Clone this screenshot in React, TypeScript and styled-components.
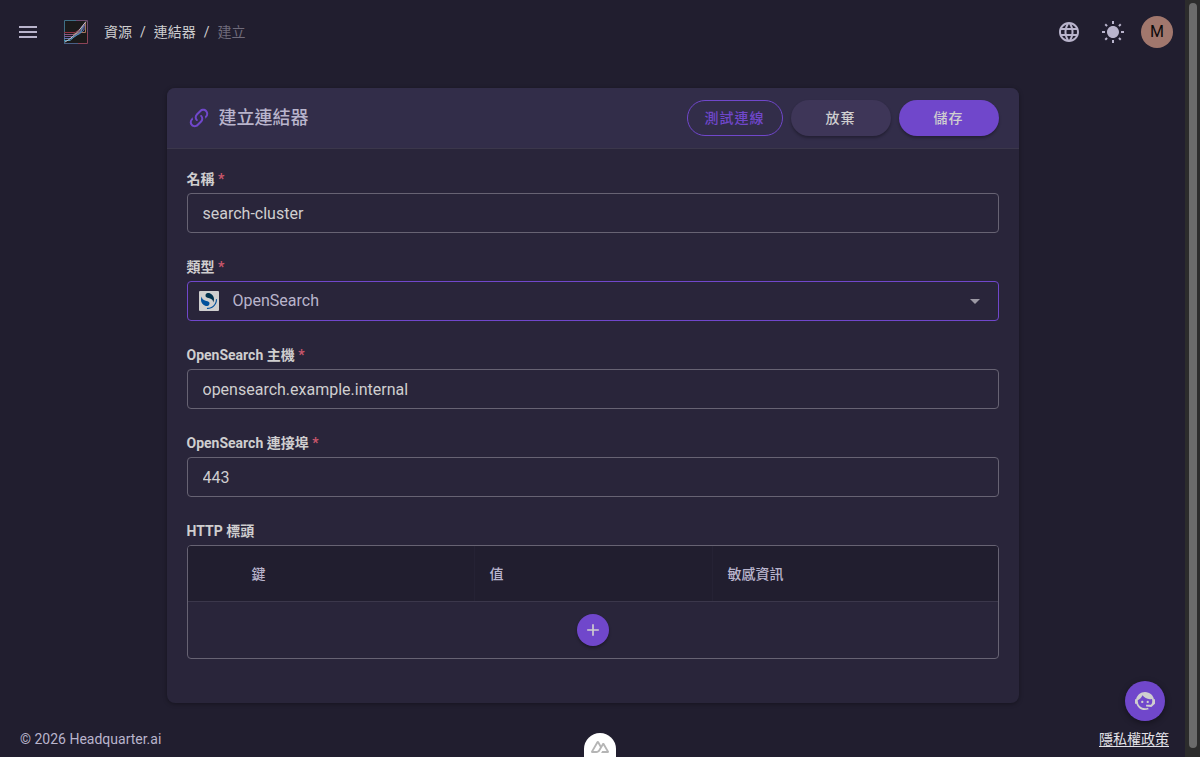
import React from "react";
import styled, { createGlobalStyle, css } from "styled-components";
import { MdLanguage } from "react-icons/md";

const color = {
  page: "#211e2f",
  card: "#29253a",
  cardHead: "#322d49",
  neutral: "#3e3658",
  primary: "#7047cb",
  line: "#3b374b",
  outline: "#676373",
  text: "#cfcecf",
  soft: "#b9b4cc",
  muted: "#6f6b7b",
  danger: "#c8566b",
};

const GlobalStyle = createGlobalStyle`
  *, *::before, *::after { box-sizing: border-box; }
  body {
    margin: 0;
    background: ${color.page};
    color: ${color.text};
    font: 14px/20px Roboto, "Noto Sans CJK TC", sans-serif;
  }
  button, input, select { font: inherit; color: inherit; }
`;

const Shell = styled.div`
  display: grid;
  grid-template-columns: minmax(0, 1fr) 15px;
  min-height: 100vh;
`;

const Page = styled.div`
  display: flex;
  flex-direction: column;
`;

const ScrollTrack = styled.div`
  display: flex;
  padding: 3px 3px 9px 4px;
  background: #2c2c2c;
`;

const ScrollThumb = styled.div`
  flex: 1;
  border-radius: 4px;
  background: #6b6b6b;
`;

const TopBar = styled.header`
  display: flex;
  align-items: center;
  height: 64px;
  padding: 0 12px 0 8px;
`;

const IconButton = styled.button`
  display: grid;
  place-items: center;
  width: 40px;
  height: 40px;
  padding: 0;
  border: 0;
  border-radius: 50%;
  background: none;
  color: ${color.soft};
  cursor: pointer;
`;

const HomeLink = styled.a`
  display: block;
  height: 24px;
  margin: 0 16px;
`;

const Crumbs = styled.ol`
  display: flex;
  flex: 1;
  margin: 0;
  padding: 0;
  list-style: none;
`;

const Crumb = styled.li<{ $current?: boolean }>`
  color: ${(p) => (p.$current ? color.muted : color.text)};

  a {
    color: inherit;
    text-decoration: none;
  }

  &:not(:first-child)::before {
    content: "/";
    padding: 0 8px;
    color: ${color.text};
  }
`;

const Tools = styled.div`
  display: flex;
  align-items: center;
  gap: 4px;
`;

const Avatar = styled.button`
  width: 32px;
  height: 32px;
  margin-left: 4px;
  padding: 0;
  border: 0;
  border-radius: 50%;
  background: #a1776d;
  color: #0c0a0a;
  font-size: 16px;
  cursor: pointer;
`;

const Main = styled.main`
  flex: 1;
  padding: 24px 16px 18px;
`;

const Card = styled.form`
  max-width: 852px;
  margin: 0 auto;
  overflow: hidden;
  border-radius: 8px;
  background: ${color.card};
  box-shadow: 0 1px 4px rgba(0, 0, 0, 0.35);
`;

const CardHead = styled.div`
  display: flex;
  align-items: center;
  gap: 8px;
  height: 61px;
  padding: 0 20px;
  border-bottom: 1px solid ${color.line};
  background: ${color.cardHead};
`;

const Title = styled.h1`
  display: flex;
  flex: 1;
  align-items: center;
  gap: 8px;
  margin: 0;
  color: ${color.soft};
  font-size: 18px;
  font-weight: 500;
  line-height: 24px;

  svg {
    color: ${color.primary};
  }
`;

const Button = styled.button<{ $kind: "outlined" | "neutral" | "primary" }>`
  height: 36px;
  min-width: ${(p) => (p.$kind === "outlined" ? 96 : 100)}px;
  padding: 0 16px;
  border: 0;
  border-radius: 18px;
  font-weight: 500;
  letter-spacing: 1px;
  cursor: pointer;
  ${(p) =>
    p.$kind === "outlined"
      ? css`
          border: 1px solid ${color.primary};
          background: none;
          color: ${color.primary};
        `
      : css`
          background: ${p.$kind === "primary" ? color.primary : color.neutral};
          box-shadow: 0 2px 3px rgba(0, 0, 0, 0.3);
        `}
`;

const CardBody = styled.div`
  display: flex;
  flex-direction: column;
  gap: 24px;
  padding: 20px 20px 44px;
`;

const Field = styled.div`
  display: flex;
  flex-direction: column;
  gap: 4px;
`;

const Label = styled.label`
  font-weight: 700;
  line-height: 20px;
`;

const Required = styled.span`
  color: ${color.danger};
`;

const TextInput = styled.input`
  width: 100%;
  height: 40px;
  padding: 0 15px;
  border: 1px solid ${color.outline};
  border-radius: 4px;
  outline: 0;
  background: none;
  font-size: 16px;
`;

const SelectBox = styled.div`
  display: grid;
  align-items: center;

  > * {
    grid-area: 1 / 1;
  }

  > svg {
    pointer-events: none;
  }
`;

const Select = styled.select`
  width: 100%;
  height: 40px;
  padding: 0 45px;
  border: 1px solid ${color.primary};
  border-radius: 4px;
  outline: 0;
  appearance: none;
  background: none;
  color: ${color.soft};
  font-size: 16px;
`;

const BrandMark = styled.svg`
  margin-left: 12px;
`;

const Arrow = styled.svg`
  justify-self: end;
  margin-right: 12px;
  color: #9c99a4;
`;

const TableFrame = styled.div`
  overflow: hidden;
  border: 1px solid ${color.outline};
  border-radius: 4px;
`;

const Table = styled.table`
  width: 100%;
  border-spacing: 0;
  table-layout: fixed;

  thead {
    background: ${color.page};
  }
`;

const EdgeCol = styled.col`
  width: 48px;
`;

const HeadCell = styled.th<{ $divided?: boolean }>`
  height: 56px;
  padding: 0 16px;
  border-bottom: 1px solid ${color.line};
  box-shadow: ${(p) => (p.$divided ? "inset 1px 0 #252234" : "none")};
  color: ${color.soft};
  font-weight: 500;
  text-align: left;
`;

const AddCell = styled.td`
  height: 56px;
  padding: 12px 0;
`;

const AddButton = styled.button`
  display: grid;
  place-items: center;
  width: 32px;
  height: 32px;
  margin: 0 auto;
  padding: 0;
  border: 0;
  border-radius: 50%;
  background: ${color.primary};
  box-shadow: 0 2px 3px rgba(0, 0, 0, 0.3);
  cursor: pointer;
`;

const Footer = styled.footer`
  display: flex;
  align-items: center;
  justify-content: space-between;
  height: 36px;
  padding: 0 16px 0 20px;
  color: ${color.soft};
`;

const PolicyLink = styled.a`
  color: #e4e2e8;
  text-underline-offset: 2px;
`;

const SupportButton = styled.button`
  position: fixed;
  right: 35px;
  bottom: 36px;
  display: grid;
  place-items: center;
  width: 40px;
  height: 40px;
  padding: 0;
  border: 0;
  border-radius: 50%;
  background: ${color.primary};
  box-shadow: 0 2px 6px rgba(0, 0, 0, 0.4);
  cursor: pointer;
`;

const DevToolsTab = styled.button`
  position: fixed;
  bottom: 0;
  left: 50%;
  display: grid;
  place-items: center;
  width: 32px;
  height: 24px;
  margin-left: -16px;
  padding: 4px 0 0;
  border: 0;
  border-radius: 16px 16px 0 0;
  background: #fff;
  color: #b5b5b5;
`;

function Glyph({ d, size = 24 }: { d: string; size?: number }) {
  return (
    <svg width={size} height={size} viewBox="0 0 24 24" fill="currentColor" aria-hidden="true">
      <path d={d} />
    </svg>
  );
}

const glyphs = {
  menu: "M3 6H21V8H3V6M3 11H21V13H3V11M3 16H21V18H3V16Z",
  sun: "M3.55 19.09L4.96 20.5L6.76 18.71L5.34 17.29M12 6C8.69 6 6 8.69 6 12S8.69 18 12 18 18 15.31 18 12C18 8.68 15.31 6 12 6M20 13H23V11H20M17.24 18.71L19.04 20.5L20.45 19.09L18.66 17.29M20.45 5L19.04 3.6L17.24 5.39L18.66 6.81M13 1H11V4H13M6.76 5.39L4.96 3.6L3.55 5L5.34 6.81L6.76 5.39M1 13H4V11H1M13 20H11V23H13",
  link: "M10.59,13.41C11,13.8 11,14.44 10.59,14.83C10.2,15.22 9.56,15.22 9.17,14.83C7.22,12.88 7.22,9.71 9.17,7.76V7.76L12.71,4.22C14.66,2.27 17.83,2.27 19.78,4.22C21.73,6.17 21.73,9.34 19.78,11.29L18.29,12.78C18.3,11.96 18.17,11.14 17.89,10.36L18.36,9.88C19.54,8.71 19.54,6.81 18.36,5.64C17.19,4.46 15.29,4.46 14.12,5.64L10.59,9.17C9.41,10.34 9.41,12.24 10.59,13.41M13.41,9.17C13.8,8.78 14.44,8.78 14.83,9.17C16.78,11.12 16.78,14.29 14.83,16.24V16.24L11.29,19.78C9.34,21.73 6.17,21.73 4.22,19.78C2.27,17.83 2.27,14.66 4.22,12.71L5.71,11.22C5.7,12.04 5.83,12.86 6.11,13.65L5.64,14.12C4.46,15.29 4.46,17.19 5.64,18.36C6.81,19.54 8.71,19.54 9.88,18.36L13.41,14.83C14.59,13.66 14.59,11.76 13.41,10.59C13,10.2 13,9.56 13.41,9.17Z",
  agent:
    "M18.72,14.76C19.07,13.91 19.26,13 19.26,12C19.26,11.28 19.15,10.59 18.96,9.95C18.31,10.1 17.63,10.18 16.92,10.18C13.86,10.18 11.15,8.67 9.5,6.34C8.61,8.5 6.91,10.26 4.77,11.22C4.73,11.47 4.73,11.74 4.73,12A7.27,7.27 0 0,0 12,19.27C13.05,19.27 14.06,19.04 14.97,18.63C15.54,19.72 15.8,20.26 15.78,20.26C14.14,20.81 12.87,21.08 12,21.08C9.58,21.08 7.27,20.13 5.57,18.42C4.53,17.38 3.76,16.11 3.33,14.73H2V10.18H3.09C3.93,6.04 7.6,2.92 12,2.92C14.4,2.92 16.71,3.87 18.42,5.58C19.69,6.84 20.54,8.45 20.89,10.18H22V14.67H22V14.69L22,14.73H21.94L18.38,18L13.08,17.4V15.73H17.91L18.72,14.76M9.27,11.77C9.57,11.77 9.86,11.89 10.07,12.11C10.28,12.32 10.4,12.61 10.4,12.91C10.4,13.21 10.28,13.5 10.07,13.71C9.86,13.92 9.57,14.04 9.27,14.04C8.64,14.04 8.13,13.54 8.13,12.91C8.13,12.28 8.64,11.77 9.27,11.77M14.72,11.77C15.35,11.77 15.85,12.28 15.85,12.91C15.85,13.54 15.35,14.04 14.72,14.04C14.09,14.04 13.58,13.54 13.58,12.91A1.14,1.14 0 0,1 14.72,11.77Z",
  plus: "M19 13H13V19H11V13H5V11H11V5H13V11H19V13Z",
};

function AppLogo() {
  return (
    <svg width="24" height="24" viewBox="0 0 24 24" fill="none" aria-hidden="true">
      <rect width="24" height="24" fill="#1b1a1b" />
      <path d="M0.5 24V0.5H12" stroke="#3f6f86" />
      <path d="M12 0.5H23.5V12" stroke="#6d4a70" />
      <path d="M23.5 12V23.5H14" stroke="#8c4358" />
      <path d="M14 23.5H0" stroke="#4a5f86" />
      <path d="M0 12.5H11L15 10L22 2" stroke="#8f3344" />
      <path d="M0 14.5H10L14 13L21 5" stroke="#8d5583" />
      <path d="M9 14.5L15 12.5H21.5V3" stroke="#a3765c" />
      <path d="M0 16.5H9L13 14.5L18 10L20 5" stroke="#7a5a96" />
      <path d="M0 18.5H8L12 15.5L16 13.5L20 10V4" stroke="#5d6fae" />
      <path d="M0 20.5H6L10 17L17 12L18.5 6" stroke="#4a97b8" />
      <path d="M1 22L5 19.5L10 15.5L15 10.5L22 1.5" stroke="#c3c1cb" />
    </svg>
  );
}

function TextField({ id, label, value }: { id: string; label: string; value: string }) {
  return (
    <Field>
      <Label htmlFor={id}>
        {label} <Required>*</Required>
      </Label>
      <TextInput id={id} defaultValue={value} required />
    </Field>
  );
}

export default function App() {
  return (
    <Shell>
      <GlobalStyle />
      <Page>
        <TopBar>
          <IconButton type="button" aria-label="選單">
            <Glyph d={glyphs.menu} />
          </IconButton>
          <HomeLink href="#" aria-label="Headquarter.ai">
            <AppLogo />
          </HomeLink>
          <Crumbs>
            <Crumb>
              <a href="#resources">資源</a>
            </Crumb>
            <Crumb>
              <a href="#connectors">連結器</a>
            </Crumb>
            <Crumb $current>建立</Crumb>
          </Crumbs>
          <Tools>
            <IconButton type="button" aria-label="語言">
              <MdLanguage size={24} />
            </IconButton>
            <IconButton type="button" aria-label="佈景主題">
              <Glyph d={glyphs.sun} />
            </IconButton>
            <Avatar type="button">M</Avatar>
          </Tools>
        </TopBar>

        <Main>
          <Card onSubmit={(e) => e.preventDefault()}>
            <CardHead>
              <Title>
                <Glyph d={glyphs.link} />
                建立連結器
              </Title>
              <Button type="button" $kind="outlined">
                測試連線
              </Button>
              <Button type="button" $kind="neutral">
                放棄
              </Button>
              <Button type="submit" $kind="primary">
                儲存
              </Button>
            </CardHead>

            <CardBody>
              <TextField id="name" label="名稱" value="search-cluster" />

              <Field>
                <Label htmlFor="type">
                  類型 <Required>*</Required>
                </Label>
                <SelectBox>
                  <Select id="type" defaultValue="opensearch">
                    <option value="opensearch">OpenSearch</option>
                  </Select>
                  <BrandMark width="20" height="20" viewBox="0 0 80 80" aria-hidden="true">
                    <rect width="80" height="80" rx="4" fill="#cfcfcf" />
                    <g transform="translate(8 8)">
                      <path
                        fill="#00509c"
                        d="M61.7374 23.5C60.4878 23.5 59.4748 24.513 59.4748 25.7626C59.4748 44.3813 44.3813 59.4748 25.7626 59.4748C24.513 59.4748 23.5 60.4878 23.5 61.7374C23.5 62.987 24.513 64 25.7626 64C46.8805 64 64 46.8805 64 25.7626C64 24.513 62.987 23.5 61.7374 23.5Z"
                      />
                      <path
                        fill="#00324e"
                        d="M48.0814 38C50.2572 34.4505 52.3615 29.7178 51.9475 23.0921C51.0899 9.36725 38.6589 -1.04463 26.9206 0.0837327C22.3253 0.525465 17.6068 4.2712 18.026 10.9805C18.2082 13.8961 19.6352 15.6169 21.9544 16.9399C24.1618 18.1992 26.9978 18.9969 30.2128 19.9011C34.0962 20.9934 38.6009 22.2203 42.063 24.7717C46.2125 27.8295 49.0491 31.3743 48.0814 38Z"
                      />
                      <path
                        fill="#00509c"
                        d="M3.91861 14C1.74276 17.5495 -0.361506 22.2822 0.0524931 28.9079C0.910072 42.6327 13.3411 53.0446 25.0794 51.9163C29.6747 51.4745 34.3932 47.7288 33.974 41.0195C33.7918 38.1039 32.3647 36.3831 30.0456 35.0601C27.8382 33.8008 25.0022 33.0031 21.7872 32.0989C17.9038 31.0066 13.3991 29.7797 9.93694 27.2283C5.78746 24.1704 2.95092 20.6257 3.91861 14Z"
                      />
                    </g>
                  </BrandMark>
                  <Arrow width="24" height="24" viewBox="0 0 24 24" fill="currentColor" aria-hidden="true">
                    <path d="M7 10L12 15L17 10H7Z" />
                  </Arrow>
                </SelectBox>
              </Field>

              <TextField id="host" label="OpenSearch 主機" value="opensearch.example.internal" />
              <TextField id="port" label="OpenSearch 連接埠" value="443" />

              <Field>
                <Label as="div" id="headers-label">
                  HTTP 標頭
                </Label>
                <TableFrame>
                  <Table aria-labelledby="headers-label">
                    <colgroup>
                      <EdgeCol />
                      <col />
                      <col />
                      <col />
                      <EdgeCol />
                    </colgroup>
                    <thead>
                      <tr>
                        <HeadCell />
                        <HeadCell scope="col">鍵</HeadCell>
                        <HeadCell scope="col" $divided>
                          值
                        </HeadCell>
                        <HeadCell scope="col" $divided>
                          敏感資訊
                        </HeadCell>
                        <HeadCell />
                      </tr>
                    </thead>
                    <tbody>
                      <tr>
                        <AddCell colSpan={5}>
                          <AddButton type="button" aria-label="新增標頭">
                            <Glyph d={glyphs.plus} size={20} />
                          </AddButton>
                        </AddCell>
                      </tr>
                    </tbody>
                  </Table>
                </TableFrame>
              </Field>
            </CardBody>
          </Card>
        </Main>

        <Footer>
          <span>© 2026 Headquarter.ai</span>
          <PolicyLink href="#privacy">隱私權政策</PolicyLink>
        </Footer>
      </Page>

      <ScrollTrack aria-hidden="true">
        <ScrollThumb />
      </ScrollTrack>

      <SupportButton type="button" aria-label="客服">
        <Glyph d={glyphs.agent} />
      </SupportButton>

      <DevToolsTab type="button" aria-label="Nuxt DevTools">
        <svg width="18" height="18" viewBox="0 0 324 324" fill="currentColor" aria-hidden="true">
          <path d="M181.767 270H302.211C306.037 270 309.795 269.003 313.108 267.107C316.421 265.211 319.172 262.484 321.084 259.2C322.996 255.915 324.002 252.19 324 248.399C323.998 244.607 322.989 240.883 321.074 237.601L240.187 98.7439C238.275 95.4607 235.525 92.7342 232.213 90.8385C228.901 88.9429 225.143 87.9449 221.318 87.9449C217.494 87.9449 213.736 88.9429 210.424 90.8385C207.112 92.7342 204.361 95.4607 202.449 98.7439L181.767 134.272L141.329 64.7975C139.416 61.5145 136.664 58.7884 133.351 56.8931C130.038 54.9978 126.28 54 122.454 54C118.629 54 114.871 54.9978 111.558 56.8931C108.245 58.7884 105.493 61.5145 103.58 64.7975L2.92554 237.601C1.01067 240.883 0 244.607 0 248.399C0 252.19 1.00407 255.915 2.91605 259.2C4.82803 262.484 7.57884 265.211 10.8918 267.107C14.2047 269.003 17.963 270 21.7886 270H97.3936C127.349 270 149.44 256.959 164.641 231.517L201.546 168.172L221.313 134.272L280.637 236.1H201.546L181.767 270ZM96.1611 236.065L43.3984 236.054L122.49 100.291L161.953 168.172L135.531 213.543C125.436 230.051 113.968 236.065 96.1611 236.065Z" />
        </svg>
      </DevToolsTab>
    </Shell>
  );
}
